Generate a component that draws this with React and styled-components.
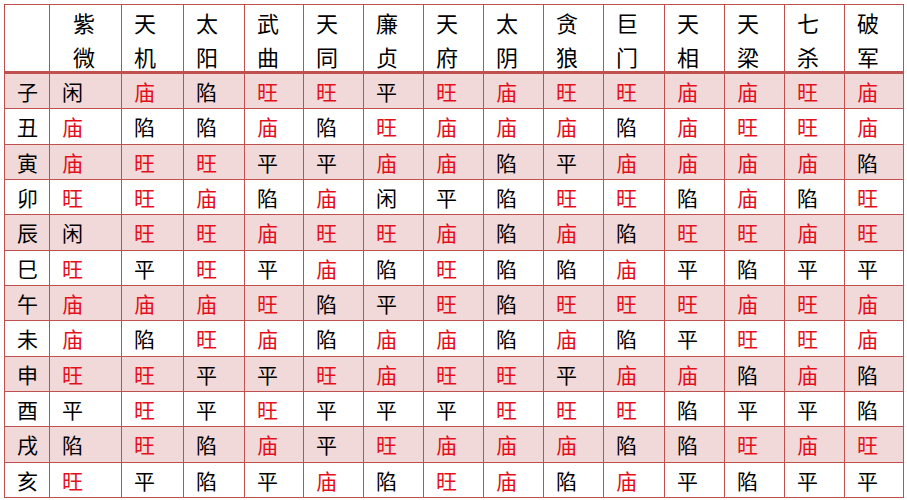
import React from "react";
import styled, { createGlobalStyle } from "styled-components";

const GlobalStyle = createGlobalStyle`
  html, body {
    margin: 0;
    padding: 0;
    background: #fff;
  }
  body {
    font-family: "Noto Sans CJK SC", "Noto Sans", sans-serif;
  }
`;

const LINE = "#c0504d";

const Page = styled.div`
  width: 907px;
  height: 500px;
  padding: 4px 0 0 4px;
  box-sizing: border-box;
  overflow: hidden;
`;

// 표 전체: 배경색이 곧 선 색상 (gap 1px)
const Grid = styled.div`
  display: grid;
  grid-template-columns: 44px 71px 61px 60px 58px 59px 59px 59px 59px 59px 60px 59px 59px 59px 58px;
  grid-template-rows: 68px repeat(12, 1fr);
  gap: 1px;
  width: 900px;
  height: 494px;
  padding: 1px;
  box-sizing: border-box;
  background: ${LINE};
`;

const HeadCell = styled.div`
  background: #fff;
  margin-bottom: 2px;
  padding-left: ${(p) => (p.$indent ? "23px" : "12px")};
  font-size: 22px;
  line-height: 34px;
  color: #000;
  white-space: pre-line;
`;

const Cell = styled.div`
  background: ${(p) => (p.$striped ? "#f2d9d9" : "#fff")};
  display: flex;
  align-items: center;
  padding-left: 12px;
  font-size: 21px;
  color: ${(p) => (p.$red ? "#e3101c" : "#000")};
`;

const stars = ["", "紫\n微", "天\n机", "太\n阳", "武\n曲", "天\n同", "廉\n贞", "天\n府", "太\n阴", "贪\n狼", "巨\n门", "天\n相", "天\n梁", "七\n杀", "破\n军"];

const rows = [
  ["子", "闲庙陷旺旺平旺庙旺旺庙庙旺庙"],
  ["丑", "庙陷陷庙陷旺庙庙庙陷庙旺旺庙"],
  ["寅", "庙旺旺平平庙庙陷平庙庙庙庙陷"],
  ["卯", "旺旺庙陷庙闲平陷旺旺陷庙陷旺"],
  ["辰", "闲旺旺庙旺旺庙陷庙陷旺旺庙旺"],
  ["巳", "旺平旺平庙陷旺陷陷庙平陷平平"],
  ["午", "庙庙庙旺陷平旺陷旺旺旺庙旺庙"],
  ["未", "庙陷旺庙陷庙庙陷庙陷平旺旺庙"],
  ["申", "旺旺平平旺庙旺旺平庙庙陷庙陷"],
  ["酉", "平旺平旺平平平旺旺旺陷平平陷"],
  ["戌", "陷旺陷庙平旺庙庙庙陷陷旺庙旺"],
  ["亥", "旺平陷平庙陷旺庙陷庙平陷平平"],
];

const isRed = (c) => c === "庙" || c === "旺";

export default function App() {
  return (
    <Page>
      <GlobalStyle />
      <Grid>
        {stars.map((s, i) => (
          <HeadCell key={"h" + i} $indent={i === 1}>
            {s}
          </HeadCell>
        ))}
        {rows.map(([branch, values], r) => {
          const striped = r % 2 === 0;
          return (
            <React.Fragment key={branch}>
              <Cell $striped={striped}>{branch}</Cell>
              {values.split("").map((v, c) => (
                <Cell key={c} $striped={striped} $red={isRed(v)}>
                  {v}
                </Cell>
              ))}
            </React.Fragment>
          );
        })}
      </Grid>
    </Page>
  );
}
